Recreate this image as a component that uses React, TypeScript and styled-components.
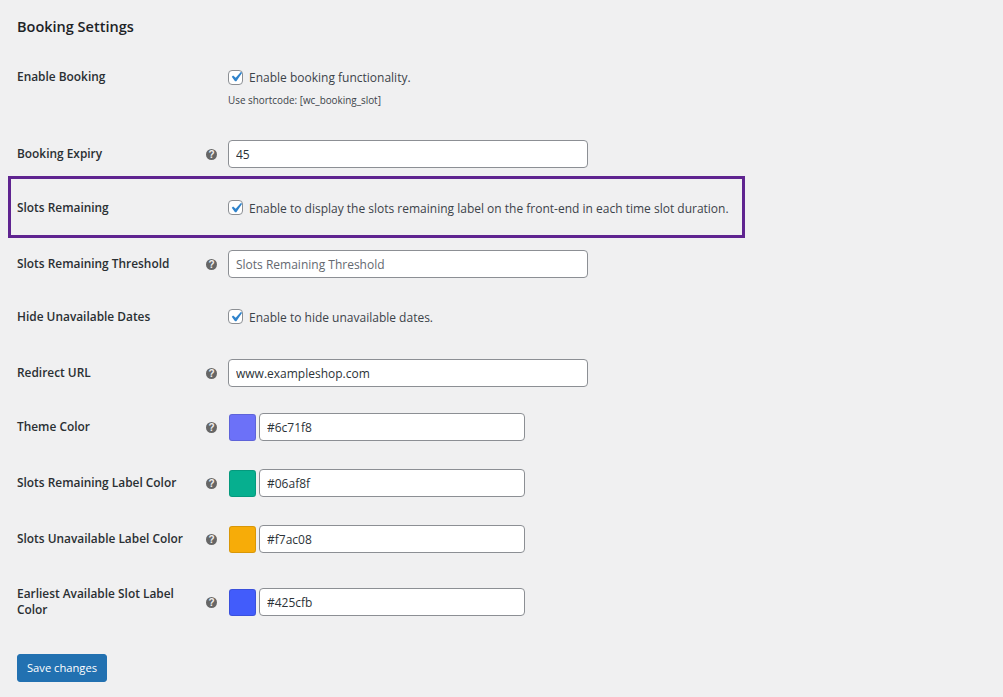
import styled, { createGlobalStyle } from 'styled-components'

const GlobalStyle = createGlobalStyle`
  html, body {
    margin: 0;
    padding: 0;
    background: #f0f0f1;
  }
  body {
    font-family: "Open Sans", "Noto Sans", "Liberation Sans", sans-serif;
    font-size: 12px;
    color: #3c434a;
  }
`

function Help() {
  return <HelpTip>?</HelpTip>
}

function CheckBox() {
  return (
    <Box>
      <svg viewBox="0 0 20 20" width="20" height="20">
        <path fill="#2f83cc" d="M14.83 4.89l1.34.94-5.81 8.38H9.02L5.78 9.67l1.34-1.25 2.57 2.4z" />
      </svg>
    </Box>
  )
}

function ColorField({ value }: { value: string }) {
  return (
    <ColorRow>
      <Swatch $color={value} />
      <ColorInput defaultValue={value} />
    </ColorRow>
  )
}

export default function App() {
  return (
    <Page>
      <GlobalStyle />
      <Title>Booking Settings</Title>

      <Row $height={67} $top>
        <Label>Enable Booking</Label>
        <HelpCell />
        <div>
          <CheckLine>
            <CheckBox />
            <CheckText>Enable booking functionality.</CheckText>
          </CheckLine>
          <Description>Use shortcode: [wc_booking_slot]</Description>
        </div>
      </Row>

      <Row $height={53}>
        <Label>Booking Expiry</Label>
        <HelpCell><Help /></HelpCell>
        <TextInput defaultValue="45" />
      </Row>

      <Row $height={55} $highlighted>
        <Label>Slots Remaining</Label>
        <HelpCell />
        <CheckLine>
          <CheckBox />
          <CheckText>Enable to display the slots remaining label on the front-end in each time slot duration.</CheckText>
        </CheckLine>
      </Row>

      <Row $height={57}>
        <Label>Slots Remaining Threshold</Label>
        <HelpCell><Help /></HelpCell>
        <TextInput placeholder="Slots Remaining Threshold" />
      </Row>

      <Row $height={49}>
        <Label>Hide Unavailable Dates</Label>
        <HelpCell />
        <CheckLine>
          <CheckBox />
          <CheckText>Enable to hide unavailable dates.</CheckText>
        </CheckLine>
      </Row>

      <Row $height={63}>
        <Label>Redirect URL</Label>
        <HelpCell><Help /></HelpCell>
        <TextInput defaultValue="www.exampleshop.com" />
      </Row>

      <Row $height={45}>
        <Label>Theme Color</Label>
        <HelpCell><Help /></HelpCell>
        <ColorField value="#6c71f8" />
      </Row>

      <Row $height={67}>
        <Label>Slots Remaining Label Color</Label>
        <HelpCell><Help /></HelpCell>
        <ColorField value="#06af8f" />
      </Row>

      <Row $height={45}>
        <Label>Slots Unavailable Label Color</Label>
        <HelpCell><Help /></HelpCell>
        <ColorField value="#f7ac08" />
      </Row>

      <Row $height={81}>
        <Label>Earliest Available Slot Label Color</Label>
        <HelpCell><Help /></HelpCell>
        <ColorField value="#425cfb" />
      </Row>

      <SaveButton>Save changes</SaveButton>
    </Page>
  )
}

const Page = styled.div`
  padding: 0 0 15px 17px;
`

const Title = styled.h2`
  margin: 0;
  height: 60px;
  padding-top: 16px;
  box-sizing: border-box;
  font-size: 14.5px;
  line-height: 22px;
  font-weight: 600;
  color: #1d2327;
`

const Row = styled.div<{ $height: number; $top?: boolean; $highlighted?: boolean }>`
  position: relative;
  display: grid;
  grid-template-columns: 183px 28px 1fr;
  align-items: ${p => (p.$top ? 'start' : 'center')};
  height: ${p => p.$height}px;
  padding-top: ${p => (p.$top ? '8px' : '0')};
  box-sizing: border-box;

  ${p =>
    p.$highlighted &&
    `
    &::after {
      content: '';
      position: absolute;
      left: -9px;
      top: -4px;
      width: 737px;
      height: 62px;
      box-sizing: border-box;
      border: 3px solid #5f2490;
    }
  `}
`

const Label = styled.div`
  padding-bottom: 1px;
  font-size: 11.9px;
  line-height: 16px;
  font-weight: 600;
  color: #2a2f33;
`

const HelpCell = styled.div`
  display: flex;
  padding: 2px 0 0 6px;
`

const HelpTip = styled.span`
  display: block;
  width: 11px;
  height: 11px;
  border-radius: 50%;
  background: #666;
  color: #f0f0f1;
  font-family: "Liberation Sans", sans-serif;
  font-size: 10px;
  line-height: 11px;
  font-weight: 700;
  text-align: center;
`

const CheckLine = styled.label`
  display: flex;
  align-items: center;
  gap: 6px;
`

const CheckText = styled.span`
  padding-top: 2px;
  line-height: 16px;
`

const Box = styled.span`
  display: flex;
  align-items: center;
  justify-content: center;
  width: 15px;
  height: 15px;
  box-sizing: border-box;
  flex: none;
  background: #fff;
  border: 1px solid #8c8f94;
  border-radius: 4px;

  svg {
    flex: none;
    margin: -3px;
  }
`

const Description = styled.p`
  margin: 6px 0 0;
  font-size: 9.9px;
  line-height: 16px;
  color: #3c434a;
`

const TextInput = styled.input.attrs({ type: 'text' })`
  display: block;
  width: 360px;
  height: 28px;
  box-sizing: border-box;
  padding: 2px 7px 0;
  background: #fff;
  border: 1px solid #8c8f94;
  border-radius: 4px;
  font: inherit;
  font-size: 12px;
  color: #2c3338;
  &::placeholder {
    color: #646970;
    opacity: 1;
  }
`

const ColorRow = styled.div`
  display: flex;
  align-items: flex-start;
  gap: 3px;
`

const Swatch = styled.span<{ $color: string }>`
  display: block;
  width: 27px;
  height: 27px;
  margin: 1px 0 0 1px;
  box-sizing: border-box;
  background: ${p => p.$color};
  border: 1px solid rgba(0, 0, 0, 0.12);
  border-radius: 3px;
`

const ColorInput = styled(TextInput)`
  width: 266px;
`

const SaveButton = styled.button`
  display: block;
  width: 90px;
  height: 28px;
  margin-top: 12px;
  padding: 0 0 2px;
  background: #2271b1;
  border: 1px solid #2271b1;
  border-radius: 3px;
  color: #fff;
  font: inherit;
  font-size: 11.2px;
`
